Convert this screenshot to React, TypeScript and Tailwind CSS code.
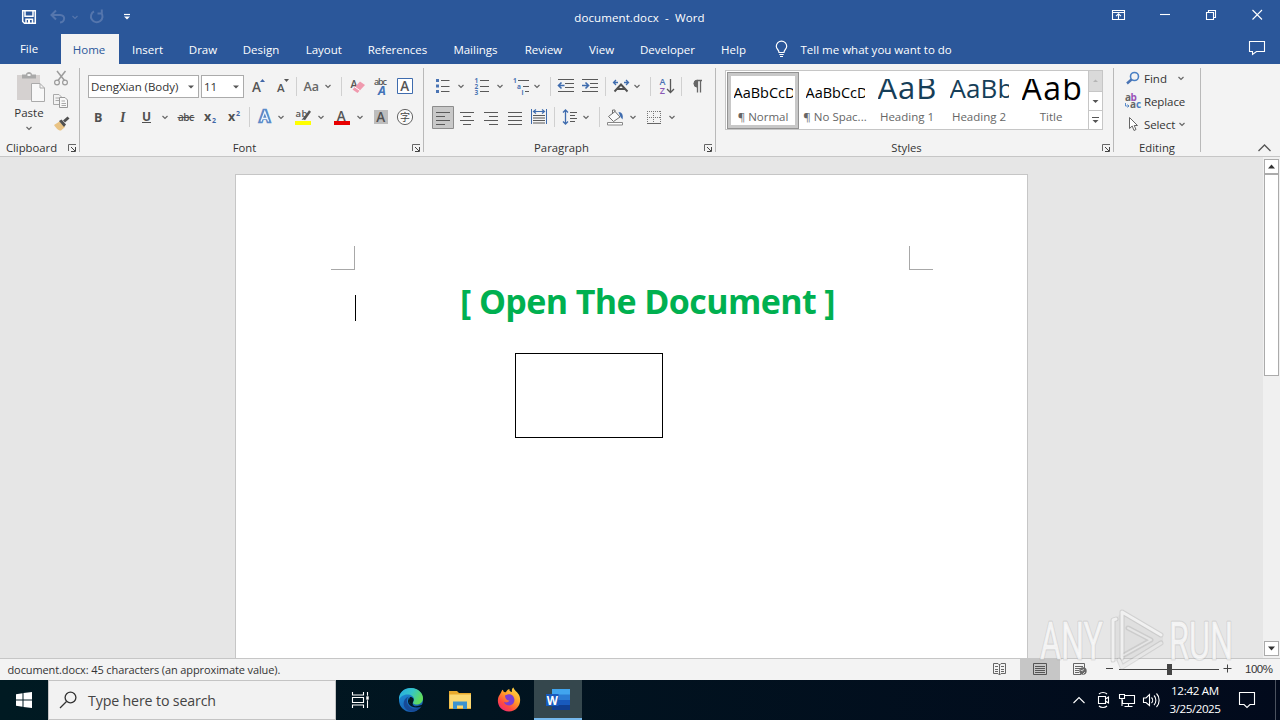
import type { ReactNode } from "react";

type SlotProps = { x: number; y: number; w: number; h: number; children?: ReactNode };

/* A drawing slot: its viewBox starts at (x, y), so strokes can be given in window coordinates. */
function Slot({ x, y, w, h, children }: SlotProps) {
  return (
    <svg
      className="block shrink-0"
      width={w}
      height={h}
      viewBox={`${x} ${y} ${w} ${h}`}
      fill="none"
      fontFamily="'Open Sans', sans-serif"
    >
      {children}
    </svg>
  );
}

function Chev({ x, y, c = "#666" }: { x: number; y: number; c?: string }) {
  return <path d={`M${x - 2.5} ${y - 1}l2.5 2.5l2.5-2.5`} stroke={c} strokeWidth="1.2" />;
}

function Tri({ x, y, c = "#555" }: { x: number; y: number; c?: string }) {
  return <path d={`M${x - 3} ${y - 1.5}h6l-3 3z`} fill={c} />;
}

function VLine({ x, y1, y2 }: { x: number; y1: number; y2: number }) {
  return <path d={`M${x + 0.5} ${y1}V${y2}`} stroke="#d0d0d0" />;
}

function Launcher({ x }: { x: number }) {
  return (
    <Slot x={x} y={143} w={11} h={10}>
      <path d={`M${x + 0.5} 151V144.5H${x + 8}`} stroke="#666" />
      <path d={`M${x + 3} 147l4 4M${x + 7.5} 147V151.5H${x + 3}`} stroke="#444" />
    </Slot>
  );
}

function Lines({ x, y, rows }: { x: number; y: number; rows: number[][] }) {
  return (
    <path
      d={rows.map(([a, b], i) => `M${x + a} ${y + i * 4 + 0.5}H${x + b}`).join("")}
      stroke="#595959"
      strokeWidth="1.1"
    />
  );
}

const tabs = [
  { name: "Insert", cls: "w-[57px]" },
  { name: "Draw", cls: "w-[54px]" },
  { name: "Design", cls: "w-[62px]" },
  { name: "Layout", cls: "w-[63.5px]" },
  { name: "References", cls: "w-[84px]" },
  { name: "Mailings", cls: "w-[72px]" },
  { name: "Review", cls: "w-[64px]" },
  { name: "View", cls: "w-[52px]" },
  { name: "Developer", cls: "w-[80px]" },
  { name: "Help", cls: "w-[52px]" },
];

function TitleBar() {
  return (
    <div className="flex h-[34px] justify-between">
      <Slot x={0} y={0} w={140} h={34}>
        <path d="M22.7 10.7H35.3V23.3H24.5L22.7 21.5zM25 11V16.2H33V11M26 23V19.2H32.5V23" stroke="#fff" strokeWidth="1.5" />
        <path d="M28 20h2v3h-2z" fill="#fff" />
        <g stroke="#5576ad" strokeWidth="2">
          <path d="M56 10.5L51.5 15L56 19.500M52 15H60C66 15.500 65 22 60 22.500" />
          <path d="M101 12.500A5.800 5.800 0 1 1 94 11.300M101.800 9.500V13.500H97.500" />
        </g>
        <Chev x={75} y={17} c="#5575ab" />
        <path d="M124 14.5H130" stroke="#fff" strokeWidth="1.2" />
        <Tri x={127} y={18} c="#fff" />
      </Slot>
      <div className="mt-[8px] flex h-[20px] w-[300px] translate-x-[19.500px] items-center justify-center whitespace-pre text-[11.5px] tracking-[0.1px]">
        document.docx  -  Word
      </div>
      <Slot x={1100} y={0} w={180} h={34}>
        <g stroke="#fff" strokeWidth="1.1">
          <path d="M1112.500 10.500H1124.500V19.500H1112.500zM1112.500 12.500H1124.500M1118.500 19V14M1116 16.200L1118.500 13.800L1121 16.200" />
          <path d="M1160 14.500H1170" />
          <path d="M1206.500 12.500H1213.500V19.500H1206.500zM1208.500 12V10.500H1215.500V17.500H1214" />
          <path d="M1252.500 10L1262 19.500M1262 10L1252.500 19.500" />
        </g>
      </Slot>
    </div>
  );
}

function TabRow() {
  return (
    <div className="flex h-[30px] items-stretch text-[11.5px]">
      <div className="flex w-[61px] items-center justify-center pr-[3px]">File</div>
      <div className="flex w-[58px] items-center justify-center bg-[#f3f3f3] pt-[2px] pr-[2px] text-[#2b579a]">Home</div>
      {tabs.map((t) => (
        <div key={t.name} className={`flex shrink-0 items-center justify-center pt-[2px] ${t.cls}`}>
          {t.name}
        </div>
      ))}
      <Slot x={760} y={34} w={41} h={30}>
        <g stroke="#fff" strokeWidth="1.2">
          <path d="M779 52.500C779 49.500 776.300 49.500 776.300 46.300A5.200 5.200 0 0 1 786.700 46.300C786.700 49.500 784 49.500 784 52.500zM779.300 54.500H783.700M780 56.500H783" />
        </g>
      </Slot>
      <div className="flex items-center pb-px whitespace-nowrap">
        <span className="translate-y-[1px]">Tell me what you want to do</span>
      </div>
      <div className="ml-auto">
        <Slot x={1240} y={34} w={40} h={30}>
          <path d="M1249.500 41.500H1264.500V51.500H1256.500L1252.500 54.500V51.500H1249.500z" stroke="#fff" strokeWidth="1.1" />
        </Slot>
      </div>
    </div>
  );
}

function Sep() {
  return <div className="mt-[4px] h-[84px] w-px shrink-0 bg-[#b9b9b9]" />;
}

function GroupLabel({ name, x, pad }: { name: string; x?: number; pad: string }) {
  return (
    <div className="flex h-[16px] items-center">
      <div className={`flex-1 text-center text-[11.3px] leading-[16px] text-[#333] ${pad}`}>{name}</div>
      {x !== undefined && <Launcher x={x} />}
    </div>
  );
}

function ClipboardGroup() {
  return (
    <div className="flex w-[79px] flex-col">
      <div className="flex h-[76px]">
        <div className="flex w-[50px] flex-col">
          <Slot x={0} y={64} w={50} h={41}>
            <path d="M17 75H40V100H17z" fill="#d5d1d0" />
            <path d="M22 74.500H26C26 71 32 71 32 74.500H36V78.500H22z" fill="#a9a9a9" />
            <path d="M27.500 74h3v2h-3z" fill="#f3f3f3" />
            <path d="M31.500 83.500H40L44.500 88V101.500H31.500z" fill="#f8f8f8" stroke="#aaa" />
            <path d="M40 83.500V88H44.500" stroke="#aaa" />
          </Slot>
          <div className="h-[16px] pl-[8px] text-center text-[11.5px] leading-[16px] text-[#333]">Paste</div>
          <Slot x={0} y={121} w={50} h={14}>
            <Chev x={29} y={128} />
          </Slot>
        </div>
        <Slot x={50} y={64} w={29} h={76}>
          <g stroke="#9c9c9c" strokeWidth="1.5">
            <path d="M57 71L64.500 80.500M65.500 71L58 80.500" />
            <circle cx="57" cy="82.500" r="2.400" strokeWidth="1.200" />
            <circle cx="65" cy="82.500" r="2.400" strokeWidth="1.200" />
          </g>
          <path d="M53.500 94.500H59L61.500 97V104.500H53.500zM55.500 98H59M55.500 100.500H59" stroke="#aaa" />
          <path d="M59.500 97.500H65L67.500 100V107.500H59.500z" fill="#f8f8f8" stroke="#999" />
          <path d="M61.500 101H65M61.500 103.500H66M61.500 105.500H66" stroke="#aaa" />
          <path d="M54 125L59.500 121.500L65 127L61 130.500C58 130.500 57 129 54 125z" fill="#e9c384" />
          <path d="M59 121L61.500 119.500L66 124.500L64 127z" fill="#505050" />
          <path d="M64 121.500L68.500 117.500" stroke="#505050" strokeWidth="3" />
        </Slot>
      </div>
      <div className="flex h-[16px] items-center">
        <div className="w-[68px] pr-[5px] text-center text-[11.3px] leading-[16px] text-[#333]">Clipboard</div>
        <Launcher x={68} />
      </div>
    </div>
  );
}

function FontGroup() {
  return (
    <div className="flex w-[343px] flex-col">
      <div className="mt-[8px] flex h-[29px] items-center">
        <div className="ml-[8px] flex h-[23px] w-[111px] items-center border border-[#ababab] bg-white pl-[2px] text-[11.5px] tracking-[-0.050px] whitespace-nowrap text-[#333]">
          <span className="w-[96px] shrink-0">DengXian (Body)</span>
          <Slot x={187} y={80} w={9} h={12}>
            <Tri x={191} y={86} />
          </Slot>
        </div>
        <div className="ml-[2px] flex h-[23px] w-[43px] items-center border border-[#ababab] bg-white pl-[2px] text-[11.5px] text-[#333]">
          <span className="w-[28px]">11</span>
          <Slot x={232} y={80} w={9} h={12}>
            <Tri x={236} y={86} />
          </Slot>
        </div>
        <Slot x={244} y={72} w={58} h={29}>
          <text x="252" y="92" fontSize="13.500" fontWeight="600" fill="#555">A</text>
          <path d="M260 82h5l-2.500-3z" fill="#3f66a8" />
          <text x="277" y="92" fontSize="11.500" fontWeight="600" fill="#555">A</text>
          <path d="M284 79h5l-2.500 3z" fill="#555" />
          <VLine x={296} y1={77} y2={96} />
        </Slot>
        <Slot x={302} y={72} w={120} h={29}>
          <text x="303.500" y="91" fontSize="12.500" fontWeight="600" fill="#666">Aa</text>
          <Chev x={328} y={86} />
          <VLine x={341} y1={77} y2={96} />
          <text x="350.500" y="88" fontSize="10.500" fontWeight="600" fill="#555">A</text>
          <path d="M352.500 89.500L360 81.500L365 85L357.500 93z" fill="#f09aae" />
          <path d="M354.800 87L359.800 90.500" stroke="#fff" />
          <text x="374" y="84.500" fontSize="9" fontWeight="600" fill="#555" textLength="13">abc</text>
          <text x="378" y="95" fontSize="12.500" fontWeight="700" fontStyle="italic" fill="#4474b8">A</text>
          <path d="M397.500 78.500H412.500V93.500H397.500z" fill="#fff" stroke="#3f6cae" />
          <text x="400.300" y="91" fontSize="13.500" fontWeight="600" fill="#555">A</text>
        </Slot>
      </div>
      <div className="mt-[1px] h-[30px]">
        <Slot x={80} y={102} w={343} h={30}>
          <g fill="#505050" fontSize="12.500" fontWeight="700">
            <text x="94" y="121.500">B</text>
            <text x="120" y="121.500" fontStyle="italic" fontFamily="'Liberation Serif', serif" fontSize="14">I</text>
            <text x="142" y="120.500" fontSize="12">U</text>
            <text x="178" y="121" fontSize="10" fontWeight="600" textLength="16">abc</text>
            <text x="204" y="121" fontSize="12.500">x</text>
            <text x="228" y="121" fontSize="12.500">x</text>
          </g>
          <path d="M142 122.500H151M177.500 117.500H194.500" stroke="#505050" />
          <text x="212" y="123" fontSize="7" fontWeight="700" fill="#3f66a8">2</text>
          <text x="236" y="116" fontSize="7" fontWeight="700" fill="#3f66a8">2</text>
          <Chev x={165} y={117} />
          <VLine x={249} y1={107} y2={127} />
          <text x="259.500" y="122" fontSize="15.500" fontWeight="600" fill="#fff" stroke="#5b8bc9" strokeWidth="2.600">A</text>
          <path d="M261 121.500L264.800 111.500L268.600 121.500M262.500 118.500H267" stroke="#eef4fb" strokeWidth="1.300" />
          <Chev x={281} y={117} />
          <text x="295.500" y="117" fontSize="9.500" fontWeight="600" fill="#555" textLength="12">ab</text>
          <path d="M304 119.500L310 111" stroke="#555" strokeWidth="2.400" />
          <path d="M301.500 120L304 117L306 119z" fill="#555" />
          <path d="M295 121H311V125H295z" fill="#ff0" />
          <Chev x={321} y={117} />
          <text x="336.800" y="120.500" fontSize="13.500" fontWeight="600" fill="#555">A</text>
          <path d="M334 121H350V125H334z" fill="#e80000" />
          <Chev x={360} y={117} />
          <path d="M374 110H388V124H374z" fill="#bdbdbd" />
          <text x="376.300" y="122" fontSize="13.500" fontWeight="600" fill="#505050">A</text>
          <circle cx="405" cy="117" r="7.600" stroke="#666" fill="#fafafa" />
          <text x="400" y="121" fontSize="10" fill="#444" fontFamily="'Noto Sans CJK SC', sans-serif">字</text>
        </Slot>
      </div>
      <div className="mt-[8px]">
        <GroupLabel name="Font" x={412} pad="pr-[3px]" />
      </div>
    </div>
  );
}

function ParagraphGroup() {
  return (
    <div className="flex w-[291px] flex-col">
      <div className="mt-[8px] h-[29px]">
        <Slot x={424} y={72} w={291} h={29}>
          <path d="M436 79h3v3h-3zM436 84.500h3v3h-3zM436 90h3v3h-3z" fill="#4a74b4" />
          <path d="M441 80.500H449.500M441 86.500H449.500M441 91.500H449.500" stroke="#595959" />
          <Chev x={461} y={86} />
          <g fill="#4a74b4" fontSize="6.500" fontWeight="700">
            <text x="474.500" y="82.500">1</text>
            <text x="474.500" y="88.500">2</text>
            <text x="474.500" y="94.500">3</text>
            <text x="513" y="82.500">1</text>
            <text x="517" y="88.500">a</text>
            <text x="521.500" y="94.500">i</text>
          </g>
          <path d="M480 80.500H489M480 86.500H489M480 91.500H489M518 80.500H529M523 86.500H529M525 91.500H529" stroke="#595959" />
          <Chev x={500} y={86} />
          <Chev x={537} y={86} />
          <VLine x={550} y1={77} y2={96} />
          <path d="M558 79.500H574M565 83.500H574M565 87.500H574M558 91.500H574" stroke="#595959" />
          <path d="M564.500 85.500H559M561.500 82.500L558.500 85.500L561.500 88.500" stroke="#3f6cae" strokeWidth="1.600" />
          <path d="M582 79.500H598M590 83.500H598M590 87.500H598M582 91.500H598" stroke="#595959" />
          <path d="M582 85.500H588M585.500 82.500L588.500 85.500L585.500 88.500" stroke="#3f6cae" strokeWidth="1.600" />
          <VLine x={605} y1={77} y2={96} />
          <path d="M613.500 82.500H618M616 80L613.500 82.500L616 85M624 82.500H628.500M626 80L628.500 82.500L626 85" stroke="#3f6cae" strokeWidth="1.300" />
          <path d="M614.500 91.500L621 84.500L627.500 91.500M617.500 89H624.500" stroke="#505050" strokeWidth="1.900" />
          <Chev x={637} y={86} />
          <VLine x={650} y1={77} y2={96} />
          <text x="659.500" y="85" fontSize="9" fontWeight="600" fill="#4a70b4">A</text>
          <text x="659.800" y="93.500" fontSize="9" fontWeight="600" fill="#8a58b5">Z</text>
          <path d="M670.500 79V92.500M667 89L670.500 92.500L674 89" stroke="#595959" strokeWidth="1.300" />
          <VLine x={681} y1={77} y2={96} />
          <path d="M697.500 80.500H702M697.500 80V92.500M700.500 80V92.500" stroke="#666" strokeWidth="1.300" />
          <path d="M697.500 80A3.600 3.600 0 0 0 697.500 87.200z" fill="#666" stroke="#666" />
        </Slot>
      </div>
      <div className="mt-[1px] h-[30px]">
        <Slot x={424} y={102} w={291} h={30}>
          <path d="M432.500 106.500H453.500V128.500H432.500z" fill="#c8c8c8" stroke="#8c8c8c" />
          <Lines x={436} y={112} rows={[[0, 14], [0, 9], [0, 14], [0, 9]]} />
          <Lines x={460} y={112} rows={[[0, 14], [3, 11], [0, 14], [3, 11]]} />
          <Lines x={484} y={112} rows={[[0, 14], [5, 14], [0, 14], [5, 14]]} />
          <Lines x={508} y={112} rows={[[0, 14], [0, 14], [0, 14], [0, 14]]} />
          <path d="M531.500 109V124M546.500 109V124" stroke="#3f6cae" />
          <path d="M534 111.500H544M536 109.500L533.500 111.500L536 113.500M542 109.500L544.500 111.500L542 113.500" stroke="#3f6cae" strokeWidth="1.200" />
          <path d="M533 115.500H545M533 118H545M533 120.500H545M533 123H545" stroke="#595959" strokeWidth="1.200" />
          <VLine x={554} y1={107} y2={127} />
          <path d="M565.500 110V124M563 112.500L565.500 110L568 112.500M563 121.500L565.500 124L568 121.500" stroke="#3f6cae" strokeWidth="1.300" />
          <path d="M570 112.500H577M570 115.500H575M570 118.500H577M570 121.500H575" stroke="#595959" />
          <Chev x={586} y={117} />
          <VLine x={599} y1={107} y2={127} />
          <path d="M608.500 116.500L615 111.500L620 117L613.500 121.500zM612.500 114V110H615V112" fill="#fafafa" stroke="#707070" />
          <path d="M618.500 112C622 112 623.500 115 622.500 119.500L620.500 117z" fill="#3f6cae" />
          <path d="M607.500 122.500H622.500V125H607.500z" stroke="#888" fill="#fff" />
          <Chev x={633} y={117} />
          <path d="M647.500 111V124M653.500 111V124M660.500 111V124M647 111.500H661M647 117.500H661" stroke="#777" strokeDasharray="1 1" />
          <path d="M647 123.500H661" stroke="#666" />
          <Chev x={672} y={117} />
        </Slot>
      </div>
      <div className="mt-[8px]">
        <GroupLabel name="Paragraph" x={704} pad="pr-[5px]" />
      </div>
    </div>
  );
}

const styleItems = [
  { label: "¶ Normal", sample: "AaBbCcD", cls: "text-[14.5px] leading-[28px] text-black", active: true },
  { label: "¶ No Spac...", sample: "AaBbCcD", cls: "text-[14.5px] leading-[28px] text-black", active: false },
  { label: "Heading 1", sample: "AaBb", cls: "text-[31px] leading-[17px] font-medium text-[#163e58] tracking-[0.9px]", active: false },
  { label: "Heading 2", sample: "AaBb", cls: "text-[26px] leading-[19px] text-[#163e58] font-medium tracking-[0.1px]", active: false },
  { label: "Title", sample: "Aab", cls: "text-[32px] leading-[17px] font-medium text-black tracking-[1.4px]", active: false },
];

function StylesGroup() {
  return (
    <div className="flex w-[397px] flex-col">
      <div className="mt-[6px] ml-[9px] flex h-[60px] w-[378px] border border-[#c6c6c6] bg-white">
        <div className="flex flex-1 pt-px pl-px">
          {styleItems.map((s, i) => (
            <div
              key={i}
              className={`flex h-[57px] w-[72px] shrink-0 flex-col items-center ${s.active ? "border border-[#939393] shadow-[inset_0_0_0_3px_#c8c8c8]" : "border border-transparent"}`}
            >
              <div className="mt-[6px] h-[23px] w-[59px] overflow-hidden">
                <div className={`whitespace-nowrap ${s.cls}`}>{s.sample}</div>
              </div>
              <div className="mt-[7px] h-[16px] text-[11.5px] leading-[16px] whitespace-nowrap text-[#666]">{s.label}</div>
            </div>
          ))}
        </div>
        <div className="flex w-[14px] flex-col border-l border-[#c6c6c6]">
          <Slot x={1089} y={71} w={13} h={20}>
            <path d="M1089 71h13v20h-13z" fill="#dadada" />
            <path d="M1093 82h5l-2.500-2.500z" fill="#b5b5b5" />
          </Slot>
          <div className="border-y border-[#c6c6c6]">
            <Slot x={1089} y={92} w={13} h={18}>
              <path d="M1092.500 100h6l-3 3z" fill="#555" />
            </Slot>
          </div>
          <Slot x={1089} y={112} w={13} h={17}>
            <path d="M1092 118.500H1099" stroke="#555" />
            <path d="M1092.500 121h6l-3 3z" fill="#555" />
          </Slot>
        </div>
      </div>
      <div className="mt-[10px]">
        <GroupLabel name="Styles" x={1102} pad="pr-[5px]" />
      </div>
    </div>
  );
}

function EditingGroup() {
  return (
    <div className="flex w-[86px] flex-col text-[11.5px] text-[#333]">
      <div className="mt-[3px] flex h-[23px] items-center">
        <Slot x={1114} y={67} w={30} h={23}>
          <circle cx="1134.500" cy="76.500" r="4" stroke="#4a80c4" strokeWidth="1.600" />
          <path d="M1131.500 79.500L1127 83.500" stroke="#4a74b4" strokeWidth="2.400" />
        </Slot>
        <span className="w-[32px] leading-[16px]">Find</span>
        <Slot x={1176} y={67} w={12} h={23}>
          <Chev x={1181} y={78} />
        </Slot>
      </div>
      <div className="flex h-[23px] items-center">
        <Slot x={1114} y={90} w={30} h={23}>
          <text x="1125" y="101" fontSize="10" fontWeight="700" fill="#666">a</text>
          <text x="1130.500" y="101" fontSize="10" fontWeight="700" fill="#9a52b8">b</text>
          <text x="1130" y="108" fontSize="10" fontWeight="700" fill="#666">a</text>
          <text x="1136" y="108" fontSize="10" fontWeight="700" fill="#4a80c4">c</text>
          <path d="M1125.500 103V106H1129M1127.500 104.500L1129 106L1127.500 107.500" stroke="#4a80c4" strokeWidth="0.900" />
        </Slot>
        <span className="leading-[16px] tracking-[-0.1px]">Replace</span>
      </div>
      <div className="flex h-[23px] items-center">
        <Slot x={1114} y={113} w={30} h={23}>
          <path d="M1129.500 117.500V128.500L1132.200 126L1134 130.500L1136 129.500L1134.200 125.500H1137.500z" fill="#fff" stroke="#666" />
        </Slot>
        <span className="w-[32px] leading-[16px] tracking-[-0.1px]">Select</span>
        <Slot x={1176} y={113} w={12} h={23}>
          <Chev x={1182} y={124} />
        </Slot>
      </div>
      <div className="mt-[4px]">
        <GroupLabel name="Editing" pad="" />
      </div>
    </div>
  );
}

function Ribbon() {
  return (
    <div className="flex h-[93px] border-b border-[#c6c6c6] bg-[#f3f3f3]">
      <ClipboardGroup />
      <Sep />
      <FontGroup />
      <Sep />
      <ParagraphGroup />
      <Sep />
      <StylesGroup />
      <Sep />
      <EditingGroup />
      <Sep />
      <div className="ml-auto flex items-end">
        <Slot x={1250} y={136} w={30} h={20}>
          <path d="M1258.500 151L1264.500 145L1270.500 151" stroke="#555" strokeWidth="1.300" />
        </Slot>
      </div>
    </div>
  );
}

function DocumentArea() {
  return (
    <div className="flex h-[501px] bg-[#e6e6e6]">
      <div className="mt-[17px] ml-[235px] flex h-[484px] w-[793px] flex-col border-x border-t border-[#c6c6c6] bg-white">
        <div className="mt-[71px] flex justify-between pr-[94px] pl-[95px]">
          <div className="h-[24px] w-[24px] border-r border-b border-[#a8a8a8]" />
          <div className="h-[24px] w-[24px] border-b border-l border-[#a8a8a8]" />
        </div>
        <div className="mt-[8px] flex h-[48px] pl-[119px]">
          <div className="mt-[17px] h-[26px] w-px bg-black" />
          <div className="ml-[104px] text-[34px] leading-[47px] font-bold tracking-[-0.600px] whitespace-nowrap text-[#00b050]">
            [ Open The Document ]
          </div>
        </div>
        <div className="mt-[27px] ml-[279px] h-[85px] w-[148px] border border-black" />
      </div>
      <div className="ml-auto flex w-[17px] flex-col items-center bg-[#f0f0f0] pt-[2px]">
        <div className="flex h-[15px] w-[15px] items-center justify-center border border-[#ababab] bg-white">
          <Slot x={0} y={0} w={9} h={9}>
            <path d="M1 6.500h7l-3.500-4z" fill="#333" />
          </Slot>
        </div>
        <div className="h-[202px] w-[15px] border border-[#ababab] bg-white" />
        <div className="mt-auto mb-[2px] flex h-[15px] w-[15px] items-center justify-center border border-[#ababab] bg-white">
          <Slot x={0} y={0} w={9} h={9}>
            <path d="M1 2.500h7l-3.500 4z" fill="#333" />
          </Slot>
        </div>
      </div>
    </div>
  );
}

function StatusBar() {
  return (
    <div className="flex h-[22px] border-t border-[#c6c6c6] bg-[#f3f3f3] text-[#333]">
      <div className="pl-[7.500px] text-[11px] leading-[22px] tracking-[-0.110px] whitespace-nowrap">
        document.docx: 45 characters (an approximate value).
      </div>
      <div className="ml-auto flex">
        <Slot x={980} y={659} w={265} h={21}>
          <path d="M993.500 663.500H998L999.500 665L1001 663.500H1005.500V673.500H1001L999.500 675L998 673.500H993.500zM999.500 664V675M995 666.500H998M995 669.500H998M995 671.500H998M1001 666.500H1004M1001 669.500H1004M1001 671.500H1004" stroke="#666" />
          <path d="M1020 659H1060V680H1020z" fill="#c6c6c6" />
          <path d="M1033.500 663.500H1046.500V674.500H1033.500zM1035 666.500H1045M1035 668.500H1045M1035 670.500H1045M1035 672.500H1045" stroke="#555" />
          <path d="M1081 674.500H1073.500V663.500H1084.500V668M1075 666.500H1083M1075 668.500H1081M1075 670.500H1079M1075 672.500H1079" stroke="#666" />
          <circle cx="1083" cy="671" r="3.700" fill="#666" />
          <path d="M1080.500 670l2 1l1-2M1083 674l2-2" stroke="#ddd" strokeWidth="0.900" />
          <path d="M1106 668.500H1113M1119 669.500H1219M1223.500 668.500H1231.500M1227.500 664.500V672.500" stroke="#444" />
          <path d="M1167 664H1172V675H1167z" fill="#444" />
        </Slot>
        <div className="w-[35px] font-['Liberation_Sans',sans-serif] text-[11.500px] leading-[21px] tracking-[-0.500px]">100%</div>
      </div>
    </div>
  );
}

function Taskbar() {
  return (
    <div className="flex h-[40px] bg-linear-to-r from-[#001a22] to-[#020a1c] text-white">
      <Slot x={0} y={680} w={48} h={40}>
        <path d="M16 694.200L22.500 693.300V699.500H16zM23.500 693.100L32 692V699.500H23.500zM16 700.500H22.500V706.700L16 705.800zM23.500 700.500H32V708L23.500 706.900z" fill="#fff" />
      </Slot>
      <div className="flex w-[288px] items-center border border-[#c4c4c4] bg-[#f2f2f2] text-[#444]">
        <Slot x={49} y={681} w={39} h={38}>
          <circle cx="70.500" cy="697.500" r="5.400" stroke="#333" strokeWidth="1.300" />
          <path d="M66.500 701.500L60 708" stroke="#333" strokeWidth="1.300" />
        </Slot>
        <span className="pt-[2px] text-[14.200px] leading-[20px] tracking-[-0.140px]">Type here to search</span>
      </div>
      <Slot x={336} y={680} w={246} h={40}>
        <defs>
          <linearGradient id="edgeTop" x1="0" y1="0" x2="1" y2="0.400">
            <stop offset="0" stopColor="#26a9e6" />
            <stop offset="0.550" stopColor="#35c5c8" />
            <stop offset="1" stopColor="#60dc5c" />
          </linearGradient>
          <linearGradient id="edgeLow" x1="0" y1="0" x2="0.600" y2="1">
            <stop offset="0" stopColor="#1f96dc" />
            <stop offset="1" stopColor="#1559ad" />
          </linearGradient>
          <linearGradient id="fox" x1="0.900" y1="0" x2="0.200" y2="1">
            <stop offset="0" stopColor="#ffe14a" />
            <stop offset="0.450" stopColor="#ff9a28" />
            <stop offset="0.750" stopColor="#ff4a40" />
            <stop offset="1" stopColor="#f0287a" />
          </linearGradient>
        </defs>
        <path d="M352.500 692V695H363.500V692M352.500 708V705H363.500V708M352.500 697.500H363.500V702.500H352.500zM367.500 692V708" stroke="#fff" strokeWidth="1.100" />
        <path d="M366 696h3v4h-3z" fill="#fff" stroke="#04161f" strokeWidth="0.600" />
        <circle cx="411" cy="700" r="12" fill="url(#edgeLow)" />
        <path d="M399 700C398.500 692.500 404 688 411 688C418.500 688 423.200 693.500 423 698.500C422.800 703 419 705 415.500 704.500C413 704 412.500 703 413.500 701.500C415 698.500 413 695 408.500 694.500C404 694 400 696.500 399 700z" fill="url(#edgeTop)" />
        <path d="M408.500 696.500C405.500 699.500 406.500 706.500 413 708.500C416.500 709.300 419.500 708 421.500 706C417 713 408.500 713 405 708C402.500 704.500 403.500 698.500 408.500 696.500z" fill="#174a96" />
        <path d="M409 697.500C408 701 410 705.500 415 706.200C418 706.400 421 705.500 422.500 704.300L423.500 704L421.500 706.500C417 708.500 410.500 707.500 408.500 703.500C407.500 701 408 699 409 697.500z" fill="#021720" />
        <path d="M410 697C413.500 697 414.500 699.500 413 702C412 704 413 705.500 414.500 706C410 705.500 407.500 701 410 697z" fill="#021720" />
        <path d="M449 691H457L459 693H471V709H449z" fill="#e8a92c" />
        <path d="M449.500 694.500H471V708H449.500z" fill="#fbd872" />
        <path d="M453 709V701.500H467V709H463V705.500H457V709z" fill="#3d93cf" />
        <path d="M501 692.500C502 690 503 689.500 503 690C503.500 692 504.500 692.500 506 692C507 690 508.500 689 509.500 689C509 691 510.500 691.500 512 692C511.500 690 512 688.500 513.500 687.500C514 690.500 518 692 519.500 696C522 703.500 517 711.500 509 711.500C501.500 711.500 497 705.500 498 699C498.300 696 500 694.500 501 692.500z" fill="url(#fox)" />
        <path d="M505 695.500C508 694.500 510 693.500 512.500 695.500C516 699 514.500 705 509.500 705.500C506.500 705.500 504.500 704 504 702C506.500 703 509 702 509.500 700.500C507 700.500 505 698.500 505 695.500z" fill="#7b3fd2" />
        <path d="M534 680H582V718H534z" fill="#35474d" />
        <path d="M534 718H582V720H534z" fill="#76b9ed" />
        <path d="M552 689H570V695H552z" fill="#41a5ee" />
        <path d="M552 694.500H570V700H552z" fill="#2b7cd3" />
        <path d="M552 700H570V705H552z" fill="#185abd" />
        <path d="M552 705H570V710H552z" fill="#103f91" />
        <path d="M546 694H558.500V706H546z" fill="#185abd" />
        <text x="546.700" y="704.500" fontSize="11.500" fontWeight="700" fill="#fff">W</text>
      </Slot>
      <div className="ml-auto flex">
        <Slot x={1060} y={680} w={104} h={40}>
          <g stroke="#fff" strokeWidth="1.100">
            <path d="M1073.500 703L1079 697.500L1084.500 703" />
            <path d="M1098.500 696.500H1105.500V703.500H1098.500zM1105.500 699L1108.500 697V703L1105.500 701M1099 694C1101 692 1105 692 1107 694M1099 706C1101 708 1105 708 1107 706" />
            <path d="M1124.500 695.500H1134.500V703.500H1122.500V700M1128.500 703.500V706.500M1124.500 706.500H1132.500M1119.500 694.500H1124.500V698.500H1119.500zM1122 699V706" />
            <path d="M1143.500 698H1146L1149.500 694.500V705.500L1146 702.500H1143.500zM1151.500 697.500C1153 699 1153 701.500 1151.500 703M1154 695.500C1156.500 698 1156.500 702.500 1154 705M1156.500 693.500C1160 697 1160 703.500 1156.500 707" />
          </g>
        </Slot>
        <div className="flex w-[62px] flex-col items-center pt-[2px] text-[11.600px] leading-[18px] whitespace-nowrap">
          <span className="tracking-[-0.300px]">12:42 AM</span>
          <span className="tracking-[-0.450px]">3/25/2025</span>
        </div>
        <Slot x={1226} y={680} w={54} h={40}>
          <path d="M1239.500 692.500H1254.500V704.500H1250L1247 707.500L1244 704.500H1239.500z" stroke="#fff" strokeWidth="1.100" />
          <path d="M1275.500 680V720" stroke="#4b525f" />
        </Slot>
      </div>
    </div>
  );
}

function Watermark() {
  return (
    <div className="pointer-events-none absolute top-[600px] left-[1030px]">
      <svg width="215" height="75" viewBox="1030 600 215 75" fill="none" fontFamily="Roboto, sans-serif">
        <path d="M1122 612L1163 637V643L1122 668L1117 661L1111 663V619L1117 617z" fill="#bbb" fillOpacity="0.150" />
        <g stroke="#888" strokeOpacity="0.220" strokeWidth="5" strokeLinejoin="round" strokeLinecap="round">
          <path d="M1122 658V612L1161 635" />
          <path d="M1128 628L1151 640L1124 655" />
          <path d="M1161 643L1122 667L1119 660" />
          <path d="M1113 660V620L1116 619" />
        </g>
        <g fontSize="51" strokeLinejoin="round">
          <g stroke="#888" strokeOpacity="0.200" strokeWidth="3">
            <text x="1040" y="659" textLength="63" lengthAdjust="spacingAndGlyphs">ANY</text>
            <text x="1169" y="659" textLength="64" lengthAdjust="spacingAndGlyphs">RUN</text>
          </g>
          <g fill="#fff" fillOpacity="0.700" stroke="#fff" strokeOpacity="0.350" strokeWidth="0.800">
            <text x="1040" y="659" textLength="63" lengthAdjust="spacingAndGlyphs">ANY</text>
            <text x="1169" y="659" textLength="64" lengthAdjust="spacingAndGlyphs">RUN</text>
          </g>
        </g>
        <g stroke="#fff" strokeOpacity="0.700" strokeWidth="3" strokeLinejoin="round" strokeLinecap="round">
          <path d="M1122 658V612L1161 635" />
          <path d="M1128 628L1151 640L1124 655" strokeOpacity="0.500" strokeWidth="2" />
          <path d="M1161 643L1122 667L1119 660" strokeOpacity="0.500" />
          <path d="M1113 660V620L1116 619" />
        </g>
      </svg>
    </div>
  );
}

export default function App() {
  return (
    <div className="relative flex h-[720px] w-[1280px] flex-col overflow-hidden font-['Open_Sans','Noto_Sans_CJK_SC',sans-serif]">
      <div className="bg-[#2b579a] text-white">
        <TitleBar />
        <TabRow />
      </div>
      <Ribbon />
      <DocumentArea />
      <StatusBar />
      <Taskbar />
      <Watermark />
    </div>
  );
}
